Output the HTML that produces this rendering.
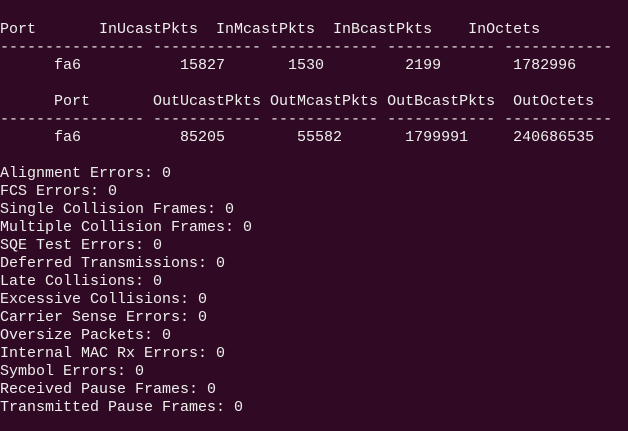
<!DOCTYPE html>
<html><head><meta charset="utf-8"><style>
html,body{margin:0;padding:0;background:#300a24;width:628px;height:431px;overflow:hidden}
pre{margin:0;position:absolute;left:0;top:21px;font-family:"Liberation Mono",monospace;font-size:15px;line-height:18px;color:#eeeeec;white-space:pre}
</style></head><body><pre>Port       InUcastPkts  InMcastPkts  InBcastPkts    InOctets
---------------- ------------ ------------ ------------ ------------
      fa6           15827       1530         2199        1782996

      Port       OutUcastPkts OutMcastPkts OutBcastPkts  OutOctets
---------------- ------------ ------------ ------------ ------------
      fa6           85205        55582       1799991     240686535

Alignment Errors: 0
FCS Errors: 0
Single Collision Frames: 0
Multiple Collision Frames: 0
SQE Test Errors: 0
Deferred Transmissions: 0
Late Collisions: 0
Excessive Collisions: 0
Carrier Sense Errors: 0
Oversize Packets: 0
Internal MAC Rx Errors: 0
Symbol Errors: 0
Received Pause Frames: 0
Transmitted Pause Frames: 0</pre></body></html>
